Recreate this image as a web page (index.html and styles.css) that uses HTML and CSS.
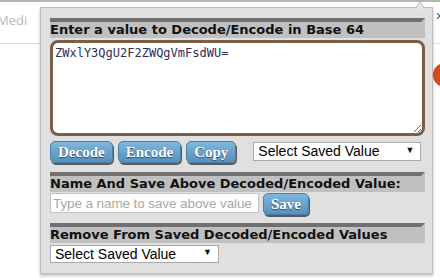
FILE: index.html
```html
<!DOCTYPE html>
<html lang="en">
<head>
    <meta charset="UTF-8">
    <meta name="viewport" content="width=device-width, initial-scale=1.0">
    <title>Base 64 Decode/Encode</title>
    <link rel="stylesheet" href="styles.css">
</head>
<body>
    <div class="topbar">
        <div class="tab">
            <span class="tab-label">Medi</span>
            <span class="tab-arrow"></span>
        </div>
        <span class="close">&times;</span>
    </div>
    <div class="page-body">
        <span class="dot"></span>
    </div>

    <div class="popup">
        <h3 class="bar">Enter a value to Decode/Encode in Base 64</h3>
        <textarea class="value-box" spellcheck="false">ZWxlY3QgU2F2ZWQgVmFsdWU=</textarea>
        <div class="row">
            <button class="btn">Decode</button>
            <button class="btn">Encode</button>
            <button class="btn">Copy</button>
            <label class="pick pick-wide">
                <select>
                    <option>Select Saved Value</option>
                </select>
            </label>
        </div>

        <h3 class="bar">Name And Save Above Decoded/Encoded Value:</h3>
        <div class="row save-row">
            <input type="text" class="name-box" placeholder="Type a name to save above value">
            <button class="btn btn-save">Save</button>
        </div>

        <h3 class="bar">Remove From Saved Decoded/Encoded Values</h3>
        <div class="row remove-row">
            <label class="pick pick-small">
                <select>
                    <option>Select Saved Value</option>
                </select>
            </label>
        </div>
    </div>
</body>
</html>
```

FILE: styles.css
```css
body {
    margin: 0;
    background: #fff;
    font-family: 'Liberation Sans', Arial, sans-serif;
    overflow: hidden;
}
.topbar {
    height: 41px;
    border-top: 2px solid #b5b5b5;
    border-bottom: 1px solid #dcdcdc;
    display: flex;
    align-items: center;
    justify-content: space-between;
}
.tab {
    display: flex;
    align-items: center;
    gap: 14px;
    margin-left: -3px;
    margin-top: -6px;
}
.tab-label {
    color: #b8b8b8;
    font-family: 'Open Sans', sans-serif;
    font-size: 13px;
}
.tab-arrow {
    width: 0;
    height: 0;
    border-top: 6px solid transparent;
    border-bottom: 6px solid transparent;
    border-left: 8px solid #1d6fb3;
}
.close {
    color: #555;
    font-size: 14px;
    margin-right: -4px;
    margin-top: -14px;
}
.page-body {
    display: flex;
    justify-content: flex-end;
}
.dot {
    width: 24px;
    height: 24px;
    border-radius: 50%;
    background: #d9481c;
    margin-top: 19px;
    margin-right: -17px;
}

/* popup */
.popup {
    position: absolute;
    left: 40px;
    top: 7px;
    width: 375px;
    height: 255px;
    padding: 10px 7px 0 9px;
    background: #e0e0e0;
    border: 1px solid #bdbdbd;
    box-shadow: 0 2px 3px rgba(0, 0, 0, 0.25);
}
.popup::before {
    content: '';
    position: absolute;
    top: -7px;
    right: 7px;
    border-left: 5px solid transparent;
    border-right: 5px solid transparent;
    border-bottom: 7px solid #bdbdbd;
}
.popup::after {
    content: '';
    position: absolute;
    top: -6px;
    right: 8px;
    border-left: 4px solid transparent;
    border-right: 4px solid transparent;
    border-bottom: 7px solid #e6e6e6;
}
.bar {
    margin: 0;
    height: 16px;
    line-height: 16px;
    border-top: 4px solid #707070;
    border-right: 4px solid #c0c0c0;
    background: #c0c0c0;
    color: #111;
    font-family: 'DejaVu Sans', Verdana, sans-serif;
    font-size: 13px;
    font-weight: bold;
    white-space: nowrap;
}
.value-box {
    display: block;
    box-sizing: border-box;
    width: 375px;
    height: 96px;
    margin-top: 2px;
    padding: 3px 2px;
    border: 3px solid #7b5e47;
    border-radius: 8px;
    background: #fff;
    color: #2e2e5a;
    font-family: 'DejaVu Sans Mono', monospace;
    font-size: 12px;
    line-height: 14px;
    resize: both;
    outline: none;
}
.row {
    display: flex;
    align-items: flex-start;
    gap: 5px;
    margin-top: 5px;
    height: 31px;
}
.btn {
    height: 22px;
    padding: 0 7px;
    border: 1px solid #4a7ea6;
    border-radius: 5px;
    background: linear-gradient(#80b6db, #5590bd);
    box-shadow: 1px 2px 0 #5a5a5a;
    color: #fff;
    font-family: 'Liberation Serif', 'Times New Roman', serif;
    font-size: 15px;
    font-weight: bold;
    line-height: 18px;
    text-shadow: 0 1px 1px #2c4f6b;
    cursor: pointer;
}
.pick {
    position: relative;
    display: block;
}
.pick::after {
    content: '\25BC';
    position: absolute;
    right: 7px;
    top: 3px;
    font-size: 9px;
    color: #111;
    pointer-events: none;
}
.pick select {
    appearance: none;
    -webkit-appearance: none;
    display: block;
    box-sizing: border-box;
    height: 19px;
    padding: 0 4px;
    border: 1px solid #a9a9a9;
    border-radius: 0;
    background: #fff;
    color: #000;
    font-family: 'Liberation Sans', Arial, sans-serif;
    font-size: 14px;
    line-height: 17px;
}
.pick-wide {
    margin-left: 12px;
    margin-top: 1px;
}
.pick-wide select {
    width: 168px;
}
.save-row {
    margin-top: 1px;
    gap: 4px;
    height: 30px;
}
.remove-row {
    margin-top: 2px;
    height: auto;
}
.pick-small select {
    width: 169px;
    height: 18px;
}
.pick-small::after {
    top: 2px;
}
.name-box {
    box-sizing: border-box;
    width: 209px;
    height: 20px;
    padding: 0 2px;
    border: 1px solid #c2c2c2;
    background: #fff;
    font-family: 'Liberation Sans', Arial, sans-serif;
    font-size: 13.5px;
    letter-spacing: -0.1px;
    outline: none;
}
.name-box::placeholder {
    color: #a8a8a8;
}
.btn-save {
    margin-top: 0;
}
```
